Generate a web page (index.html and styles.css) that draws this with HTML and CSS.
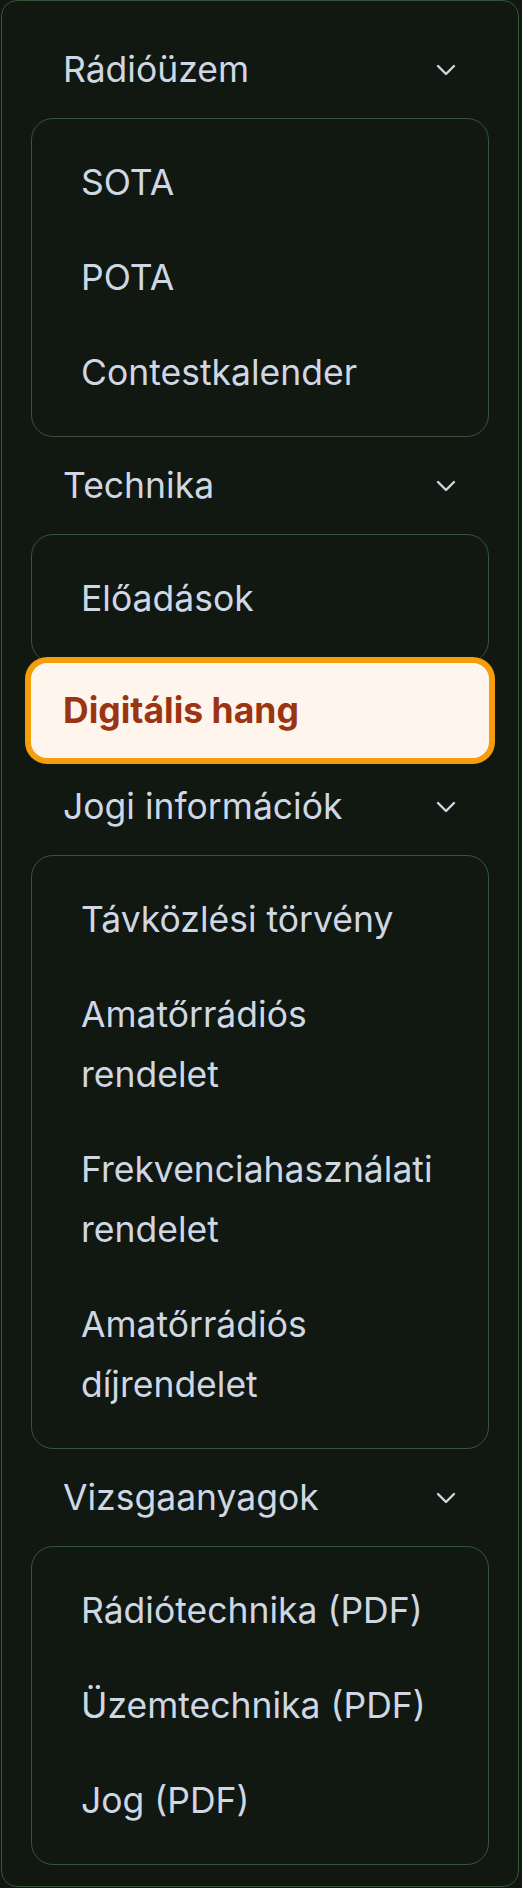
FILE: index.html
```html
<!DOCTYPE html>
<html lang="hu">
<head>
    <meta charset="UTF-8">
    <meta name="viewport" content="width=device-width, initial-scale=1.0">
    <title>Menü</title>
    <link rel="stylesheet" href="styles.css">
</head>
<body>
    <nav class="menu">
        <div class="menu-head">
            <span>Rádióüzem</span>
            <svg class="chevron" viewBox="0 0 20 12"><polyline points="2,2 10,10 18,2"/></svg>
        </div>
        <div class="submenu">
            <a class="submenu-item" href="#">SOTA</a>
            <a class="submenu-item" href="#">POTA</a>
            <a class="submenu-item" href="#">Contestkalender</a>
        </div>

        <div class="menu-head">
            <span>Technika</span>
            <svg class="chevron" viewBox="0 0 20 12"><polyline points="2,2 10,10 18,2"/></svg>
        </div>
        <div class="submenu">
            <a class="submenu-item" href="#">Előadások</a>
        </div>

        <a class="menu-link active" href="#">Digitális hang</a>

        <div class="menu-head">
            <span>Jogi információk</span>
            <svg class="chevron" viewBox="0 0 20 12"><polyline points="2,2 10,10 18,2"/></svg>
        </div>
        <div class="submenu">
            <a class="submenu-item" href="#">Távközlési törvény</a>
            <a class="submenu-item" href="#">Amatőrrádiós rendelet</a>
            <a class="submenu-item" href="#">Frekvenciahasználati rendelet</a>
            <a class="submenu-item" href="#">Amatőrrádiós díjrendelet</a>
        </div>

        <div class="menu-head">
            <span>Vizsgaanyagok</span>
            <svg class="chevron" viewBox="0 0 20 12"><polyline points="2,2 10,10 18,2"/></svg>
        </div>
        <div class="submenu">
            <a class="submenu-item" href="#">Rádiótechnika (PDF)</a>
            <a class="submenu-item" href="#">Üzemtechnika (PDF)</a>
            <a class="submenu-item" href="#">Jog (PDF)</a>
        </div>
    </nav>
</body>
</html>
```

FILE: styles.css
```css
body {
    margin: 0;
    background-color: #0f1710;
    font-family: Inter, "Noto Sans", sans-serif;
    font-size: 35.5px;
    line-height: 60px;
    color: #cfd7e4;
}
.menu {
    display: flex;
    flex-direction: column;
    margin: 0 3px 0 1px;
    padding: 20px 29px 21px;
    background-color: #101811;
    border: 1px solid #34553a;
    border-radius: 16px;
}
.menu-head {
    display: flex;
    justify-content: space-between;
    align-items: center;
    padding: 18.5px 33px 18.5px 32px;
}
.chevron {
    width: 20px;
    height: 12px;
    fill: none;
    stroke: #cfd7e4;
    stroke-width: 2.4;
    stroke-linecap: round;
    stroke-linejoin: round;
}
.submenu {
    display: flex;
    flex-direction: column;
    padding: 16px;
    border: 1px solid #34553a;
    border-radius: 22px;
}
.submenu-item {
    padding: 17.5px 33px;
    color: #cfd7e4;
    text-decoration: none;
}
.menu-link {
    position: relative;
    padding: 17.5px 32px;
    color: #cfd7e4;
    text-decoration: none;
    border-radius: 16px;
}
.menu-link.active {
    background-color: #fff5ec;
    color: #9a3412;
    font-weight: 700;
    box-shadow: 0 0 0 6px #f59e0b;
}
```
